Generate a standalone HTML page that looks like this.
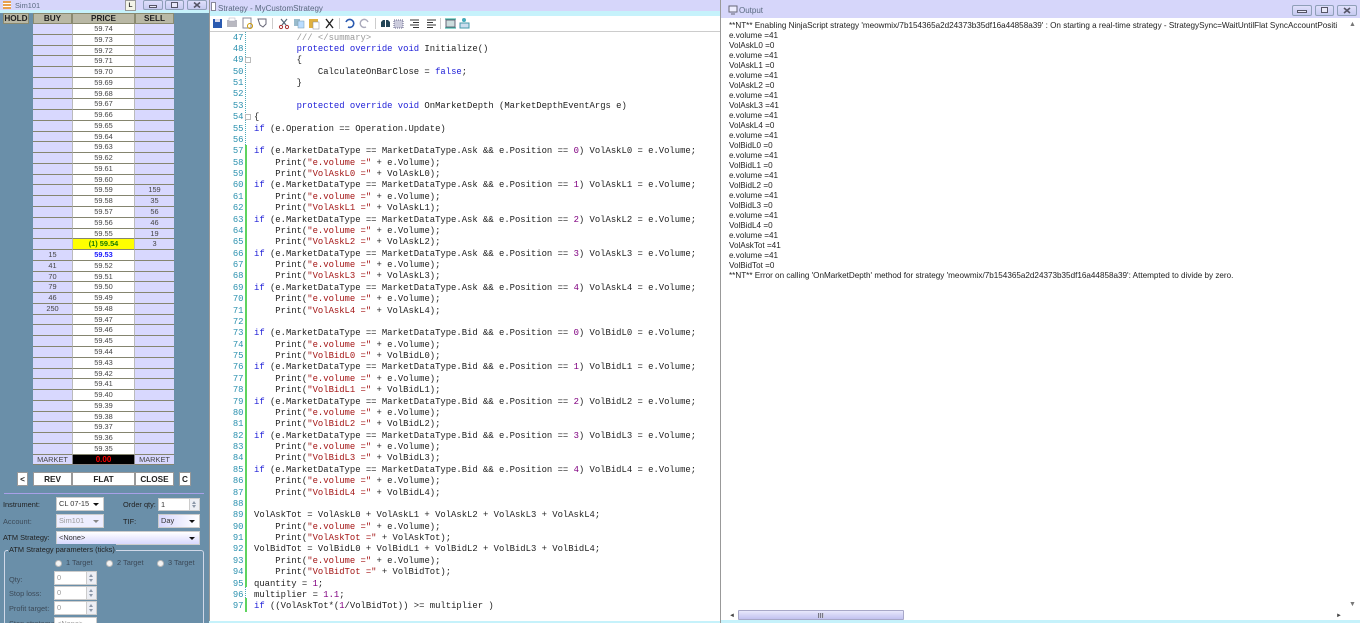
<!DOCTYPE html>
<html><head><meta charset="utf-8"><style>
html,body{margin:0;padding:0;width:1360px;height:623px;overflow:hidden;background:#d6d6fa}
*{box-sizing:border-box}
.a{position:absolute}
#left{left:0;top:0;width:209px;height:623px;background:#6a8fa9;overflow:hidden;font:7.4px/11px "Liberation Sans",sans-serif;color:#222}
.tb{left:0;top:0;height:13px;background:#d6d6fa}
.cy{background:#c6f2fb}
.title{font:8px/11px "Liberation Sans",sans-serif;color:#5a6a80}
.wb{height:10px;background:linear-gradient(#dfdffb,#c6caf0);border:1px solid #8f9fb8;border-radius:2px}
.wb svg{position:absolute;left:0;top:0}
#grid{left:33px;top:24px;width:141px;display:grid;grid-template-columns:39px 63px 39px;grid-auto-rows:10.77px;background:#8a8a70}
#grid div{text-align:center;font:7.4px/10px "Liberation Sans",sans-serif;color:#444;border-bottom:1px solid #85856f;overflow:hidden;height:10.77px}
#grid .l{background:#d8d8fe}
#grid .p{background:#fff;border-left:1px solid #bbb;border-right:1px solid #bbb}
.hd{background:#b9b8a5;font:bold 8.2px/10px "Liberation Sans",sans-serif;color:#222;text-align:center;border:1px solid #8a8a70;top:13px;height:11px}
.btn{background:#fff;border:1px solid #999;font:bold 8.2px/13px "Liberation Sans",sans-serif;text-align:center;color:#222;top:472px;height:14px}
.sel{background:#fff;border:1px solid #ccc;height:14px;font:7.4px/12px "Liberation Sans",sans-serif;padding-left:2px;color:#333;overflow:hidden}
.sel:after{content:"";position:absolute;right:4px;top:5px;border:3px solid transparent;border-top:3px solid #111;border-bottom:0}
.inp{background:#fff;border:1px solid #ccc;height:14px;font:7.4px/12px "Liberation Sans",sans-serif;padding-left:2px;color:#999;overflow:hidden}
.dis{color:#999;background:#eef}
.dis:after{border-top-color:#888}
.lb{font:7.4px/11px "Liberation Sans",sans-serif;color:#222;white-space:nowrap}
.g{color:#3c4a58}
.rd{width:7px;height:7px;border-radius:50%;background:#f4f4f4;border:1px solid #bbb}
.sp{right:0;top:0;bottom:0;width:10px;background:#eceef4;border-left:1px solid #ccc}
.sp:before{content:"";position:absolute;left:2px;top:2px;border:2.5px solid transparent;border-bottom:3px solid #8a96a8;border-top:0}
.sp:after{content:"";position:absolute;left:2px;bottom:2px;border:2.5px solid transparent;border-top:3px solid #8a96a8;border-bottom:0}
#mid{left:209px;top:0;width:511px;height:623px;background:#fff;overflow:hidden}
#code{left:45px;top:32.6px;font:8.9px/11.38px "Liberation Mono",monospace;color:#222;white-space:pre;margin:0}
#nums{left:0px;top:32.6px;width:34.5px;text-align:right;font:8.9px/11.38px "Liberation Mono",monospace;color:#2b91af;white-space:pre;margin:0}
.k{color:#2020d8}.s{color:#a31515}.n{color:#800080}.c{color:#999}
#out{left:720px;top:0;width:640px;height:623px;background:#d6d6fa;overflow:hidden;border-left:1px solid #999}
#txt{left:8px;top:21px;font:8.15px/10px "Liberation Sans",sans-serif;color:#222;white-space:pre;margin:0}
#oc{left:0;top:18px;width:640px;height:602px;background:#fff}
</style></head><body>

<div class="a" id="left">
<div class="a tb" style="width:209px"></div>
<div class="a cy" style="left:0;top:10px;width:209px;height:3px"></div>
<div class="a" style="left:3px;top:1px;width:8px;height:8px;background:repeating-linear-gradient(#e8a050 0 2px,#fff 2px 3px)"></div>
<div class="a title" style="left:15px;top:0;font-size:7.4px">Sim101</div>
<div class="a" style="left:125px;top:0;width:11px;height:11px;background:#f4f4e8;border:1px solid #999;font:bold 6.500px/9px 'Liberation Sans',sans-serif;text-align:center;color:#333">L</div>
<div class="a wb" style="left:143px;top:0;width:20px"><svg width="18" height="8"><rect x="5.500" y="4.500" width="7" height="2" fill="#e8e8f8" stroke="#556"/></svg></div>
<div class="a wb" style="left:165px;top:0;width:19px"><svg width="17" height="8"><rect x="5.500" y="1.500" width="6" height="5" fill="#e8e8f8" stroke="#556"/></svg></div>
<div class="a wb" style="left:187px;top:0;width:20px"><svg width="18" height="8"><path d="M6 1.500l6 5M12 1.500l-6 5" stroke="#556" stroke-width="1.600"/></svg></div>

<div class="a hd" style="left:3px;width:26px;">HOLD</div>
<div class="a hd" style="left:33px;width:39px;">BUY</div>
<div class="a hd" style="left:72px;width:63px;">PRICE</div>
<div class="a hd" style="left:135px;width:39px;">SELL</div>

<div class="a" id="grid">
<div class="l"></div><div class="p">59.74</div><div class="l"></div>
<div class="l"></div><div class="p">59.73</div><div class="l"></div>
<div class="l"></div><div class="p">59.72</div><div class="l"></div>
<div class="l"></div><div class="p">59.71</div><div class="l"></div>
<div class="l"></div><div class="p">59.70</div><div class="l"></div>
<div class="l"></div><div class="p">59.69</div><div class="l"></div>
<div class="l"></div><div class="p">59.68</div><div class="l"></div>
<div class="l"></div><div class="p">59.67</div><div class="l"></div>
<div class="l"></div><div class="p">59.66</div><div class="l"></div>
<div class="l"></div><div class="p">59.65</div><div class="l"></div>
<div class="l"></div><div class="p">59.64</div><div class="l"></div>
<div class="l"></div><div class="p">59.63</div><div class="l"></div>
<div class="l"></div><div class="p">59.62</div><div class="l"></div>
<div class="l"></div><div class="p">59.61</div><div class="l"></div>
<div class="l"></div><div class="p">59.60</div><div class="l"></div>
<div class="l"></div><div class="p">59.59</div><div class="l">159</div>
<div class="l"></div><div class="p">59.58</div><div class="l">35</div>
<div class="l"></div><div class="p">59.57</div><div class="l">56</div>
<div class="l"></div><div class="p">59.56</div><div class="l">46</div>
<div class="l"></div><div class="p">59.55</div><div class="l">19</div>
<div class="l"></div><div class="p" style="background:#ff0;color:#1a7a00;font-weight:bold">(1) 59.54</div><div class="l">3</div>
<div class="l">15</div><div class="p" style="color:#1a1aff;font-weight:bold">59.53</div><div class="l"></div>
<div class="l">41</div><div class="p">59.52</div><div class="l"></div>
<div class="l">70</div><div class="p">59.51</div><div class="l"></div>
<div class="l">79</div><div class="p">59.50</div><div class="l"></div>
<div class="l">46</div><div class="p">59.49</div><div class="l"></div>
<div class="l">250</div><div class="p">59.48</div><div class="l"></div>
<div class="l"></div><div class="p">59.47</div><div class="l"></div>
<div class="l"></div><div class="p">59.46</div><div class="l"></div>
<div class="l"></div><div class="p">59.45</div><div class="l"></div>
<div class="l"></div><div class="p">59.44</div><div class="l"></div>
<div class="l"></div><div class="p">59.43</div><div class="l"></div>
<div class="l"></div><div class="p">59.42</div><div class="l"></div>
<div class="l"></div><div class="p">59.41</div><div class="l"></div>
<div class="l"></div><div class="p">59.40</div><div class="l"></div>
<div class="l"></div><div class="p">59.39</div><div class="l"></div>
<div class="l"></div><div class="p">59.38</div><div class="l"></div>
<div class="l"></div><div class="p">59.37</div><div class="l"></div>
<div class="l"></div><div class="p">59.36</div><div class="l"></div>
<div class="l"></div><div class="p">59.35</div><div class="l"></div>
<div class="l">MARKET</div><div class="p" style="background:#000;color:#f00;font-weight:bold;font-size:8px;border-color:#888">0.00</div><div class="l">MARKET</div>
</div>

<div class="a btn" style="left:17px;width:11px">&lt;</div>
<div class="a btn" style="left:33px;width:39px">REV</div>
<div class="a btn" style="left:72px;width:63px">FLAT</div>
<div class="a btn" style="left:135px;width:39px">CLOSE</div>
<div class="a btn" style="left:179px;width:12px">C</div>
<div class="a" style="left:4px;top:493px;width:200px;height:1px;background:#a8a0e8"></div>

<div class="a lb" style="left:3px;top:499px">Instrument:</div>
<div class="a sel" style="left:56px;top:497px;width:48px">CL 07-15</div>
<div class="a lb" style="left:123px;top:499px">Order qty:</div>
<div class="a inp" style="left:158px;top:498px;width:42px;height:13px;color:#333">1<div class="a sp"></div></div>
<div class="a lb g" style="left:3px;top:516px;color:#3c4a58">Account:</div>
<div class="a sel dis" style="left:56px;top:514px;width:48px">Sim101</div>
<div class="a lb" style="left:123px;top:516px">TIF:</div>
<div class="a sel" style="left:158px;top:514px;width:42px;background:linear-gradient(90deg,#d8d8fe,#fff)">Day</div>
<div class="a lb" style="left:3px;top:532px">ATM Strategy:</div>
<div class="a sel" style="left:56px;top:531px;width:144px;background:linear-gradient(#fff,#d8d8fe)">&lt;None&gt;</div>
<div class="a" style="left:4px;top:550px;width:200px;height:90px;border:1px solid #d0d8e8;border-radius:3px"></div>
<div class="a lb" style="left:8px;top:544px;background:#6a8fa9;padding:0 1px">ATM Strategy parameters (ticks)</div>
<div class="a rd" style="left:55px;top:560px"></div><div class="a lb g" style="left:66px;top:557px">1 Target</div>
<div class="a rd" style="left:106px;top:560px"></div><div class="a lb g" style="left:117px;top:557px">2 Target</div>
<div class="a rd" style="left:157px;top:560px"></div><div class="a lb g" style="left:168px;top:557px">3 Target</div>
<div class="a lb g" style="left:9px;top:574px">Qty:</div>
<div class="a inp" style="left:54px;top:571px;width:43px">0<div class="a sp"></div></div>
<div class="a lb g" style="left:9px;top:588px">Stop loss:</div>
<div class="a inp" style="left:54px;top:586px;width:43px">0<div class="a sp"></div></div>
<div class="a lb g" style="left:9px;top:603px">Profit target:</div>
<div class="a inp" style="left:54px;top:601px;width:43px">0<div class="a sp"></div></div>
<div class="a lb g" style="left:9px;top:618px">Stop strategy:</div>
<div class="a inp" style="left:54px;top:617px;width:43px">&lt;None&gt;</div>
</div>

<div class="a" id="mid">
<div class="a" style="left:0;top:0;width:511px;height:11px;background:#d6d6fa"></div>
<div class="a cy" style="left:0;top:11px;width:511px;height:5px"></div>
<div class="a" style="left:0;top:0;width:1px;height:623px;background:#999"></div>
<div class="a" style="left:2px;top:2px;width:5px;height:9px;background:#fff;border:1px solid #889"></div>
<div class="a title" style="left:9px;top:3px">Strategy - MyCustomStrategy</div>
<div class="a" style="left:1px;top:31px;width:510px;height:1px;background:#ccc"></div>
<svg class="a" style="left:1px;top:16px" width="300" height="15" viewBox="0 0 300 15">
<rect x="3" y="3" width="9" height="9" fill="#2a5ab0"/><rect x="5" y="3" width="5" height="3" fill="#dde"/>
<rect x="17" y="4" width="10" height="7" fill="#b8b8c0"/><rect x="19" y="2" width="6" height="3" fill="#fff" stroke="#aab" stroke-width=".5"/>
<rect x="33" y="2" width="8" height="10" fill="#fff" stroke="#889"/><circle cx="40" cy="10" r="2.500" fill="none" stroke="#c90"/>
<path d="M48 3h8v5l-3 3-3-2z" fill="#fff" stroke="#667"/>
<line x1="62.500" y1="2" x2="62.500" y2="13" stroke="#ccc"/>
<path d="M71 3l5 6M77 3l-5 6" stroke="#567" stroke-width="1.200"/><circle cx="71" cy="11" r="1.600" fill="none" stroke="#a33"/><circle cx="77" cy="11" r="1.600" fill="none" stroke="#a33"/>
<rect x="84" y="3" width="6" height="7" fill="#9bc"/><rect x="88" y="5" width="6" height="7" fill="#bdf" stroke="#79a" stroke-width=".5"/>
<rect x="99" y="3" width="9" height="9" fill="#e0b040"/><rect x="103" y="6" width="6" height="7" fill="#fff" stroke="#889" stroke-width=".5"/>
<path d="M116 3l7 9M123 3l-7 9" stroke="#222" stroke-width="1.400"/>
<line x1="129.500" y1="2" x2="129.500" y2="13" stroke="#ccc"/>
<path d="M136 6a4 4 0 1 1 2 5" fill="none" stroke="#2a5ab0" stroke-width="1.600"/>
<path d="M158 6a4 4 0 1 0-2 5" fill="none" stroke="#aab" stroke-width="1.400"/>
<line x1="165.500" y1="2" x2="165.500" y2="13" stroke="#ccc"/>
<path d="M171 11v-5l2-2h2v7zM176 11v-7h2l2 2v5z" fill="#245"/>
<rect x="184" y="4" width="9" height="8" fill="#ccd" stroke="#668" stroke-dasharray="1 1"/>
<path d="M200 4h9M203 6.500h6M200 9h9M203 11.500h6" stroke="#333"/>
<path d="M217 4h9M217 6.500h6M217 9h9M217 11.500h6" stroke="#333"/>
<line x1="230.500" y1="2" x2="230.500" y2="13" stroke="#ccc"/>
<rect x="236" y="4" width="9" height="7" fill="#cdd" stroke="#667"/><path d="M235 3h11M235 12h11" stroke="#2a9"/>
<rect x="250" y="7" width="9" height="5" fill="#cde" stroke="#49a"/><circle cx="254" cy="4" r="2" fill="#4ab"/>
</svg>
<div class="a" style="left:35.500px;top:32px;width:0;height:113px;border-left:1px dotted #4aa8b8"></div>
<div class="a" style="left:36px;top:145px;width:2px;height:442px;background:#5fd35f"></div>
<div class="a" style="left:35.500px;top:587px;width:0;height:11px;border-left:1px dotted #4aa8b8"></div>
<div class="a" style="left:36px;top:598px;width:2px;height:14px;background:#5fd35f"></div>
<div class="a" style="left:36px;top:57px;width:6px;height:6px;border:1px solid #bbb;background:#fff"></div>
<div class="a" style="left:36px;top:114px;width:6px;height:6px;border:1px solid #bbb;background:#fff"></div>
<pre class="a" id="nums">47
48
49
50
51
52
53
54
55
56
57
58
59
60
61
62
63
64
65
66
67
68
69
70
71
72
73
74
75
76
77
78
79
80
81
82
83
84
85
86
87
88
89
90
91
92
93
94
95
96
97</pre>
<pre class="a" id="code">        <span class="c">/// &lt;/summary&gt;</span>
        <span class="k">protected override void</span> Initialize()
        {
            CalculateOnBarClose = <span class="k">false</span>;
        }

        <span class="k">protected override void</span> OnMarketDepth (MarketDepthEventArgs e)
{
<span class="k">if</span> (e.Operation == Operation.Update)

<span class="k">if</span> (e.MarketDataType == MarketDataType.Ask &amp;&amp; e.Position == <span class="n">0</span>) VolAskL0 = e.Volume;
    Print(<span class="s">"e.volume ="</span> + e.Volume);
    Print(<span class="s">"VolAskL0 ="</span> + VolAskL0);
<span class="k">if</span> (e.MarketDataType == MarketDataType.Ask &amp;&amp; e.Position == <span class="n">1</span>) VolAskL1 = e.Volume;
    Print(<span class="s">"e.volume ="</span> + e.Volume);
    Print(<span class="s">"VolAskL1 ="</span> + VolAskL1);
<span class="k">if</span> (e.MarketDataType == MarketDataType.Ask &amp;&amp; e.Position == <span class="n">2</span>) VolAskL2 = e.Volume;
    Print(<span class="s">"e.volume ="</span> + e.Volume);
    Print(<span class="s">"VolAskL2 ="</span> + VolAskL2);
<span class="k">if</span> (e.MarketDataType == MarketDataType.Ask &amp;&amp; e.Position == <span class="n">3</span>) VolAskL3 = e.Volume;
    Print(<span class="s">"e.volume ="</span> + e.Volume);
    Print(<span class="s">"VolAskL3 ="</span> + VolAskL3);
<span class="k">if</span> (e.MarketDataType == MarketDataType.Ask &amp;&amp; e.Position == <span class="n">4</span>) VolAskL4 = e.Volume;
    Print(<span class="s">"e.volume ="</span> + e.Volume);
    Print(<span class="s">"VolAskL4 ="</span> + VolAskL4);

<span class="k">if</span> (e.MarketDataType == MarketDataType.Bid &amp;&amp; e.Position == <span class="n">0</span>) VolBidL0 = e.Volume;
    Print(<span class="s">"e.volume ="</span> + e.Volume);
    Print(<span class="s">"VolBidL0 ="</span> + VolBidL0);
<span class="k">if</span> (e.MarketDataType == MarketDataType.Bid &amp;&amp; e.Position == <span class="n">1</span>) VolBidL1 = e.Volume;
    Print(<span class="s">"e.volume ="</span> + e.Volume);
    Print(<span class="s">"VolBidL1 ="</span> + VolBidL1);
<span class="k">if</span> (e.MarketDataType == MarketDataType.Bid &amp;&amp; e.Position == <span class="n">2</span>) VolBidL2 = e.Volume;
    Print(<span class="s">"e.volume ="</span> + e.Volume);
    Print(<span class="s">"VolBidL2 ="</span> + VolBidL2);
<span class="k">if</span> (e.MarketDataType == MarketDataType.Bid &amp;&amp; e.Position == <span class="n">3</span>) VolBidL3 = e.Volume;
    Print(<span class="s">"e.volume ="</span> + e.Volume);
    Print(<span class="s">"VolBidL3 ="</span> + VolBidL3);
<span class="k">if</span> (e.MarketDataType == MarketDataType.Bid &amp;&amp; e.Position == <span class="n">4</span>) VolBidL4 = e.Volume;
    Print(<span class="s">"e.volume ="</span> + e.Volume);
    Print(<span class="s">"VolBidL4 ="</span> + VolBidL4);

VolAskTot = VolAskL0 + VolAskL1 + VolAskL2 + VolAskL3 + VolAskL4;
    Print(<span class="s">"e.volume ="</span> + e.Volume);
    Print(<span class="s">"VolAskTot ="</span> + VolAskTot);
VolBidTot = VolBidL0 + VolBidL1 + VolBidL2 + VolBidL3 + VolBidL4;
    Print(<span class="s">"e.volume ="</span> + e.Volume);
    Print(<span class="s">"VolBidTot ="</span> + VolBidTot);
quantity = <span class="n">1</span>;
multiplier = <span class="n">1.1</span>;
<span class="k">if</span> ((VolAskTot*(<span class="n">1</span>/VolBidTot)) &gt;= multiplier )</pre>
<div class="a" style="left:0;top:621px;width:511px;height:2px;background:#c6f2fb"></div>
</div>

<div class="a" id="out">
<div class="a cy" style="left:0;top:620px;width:640px;height:3px"></div>
<div class="a title" style="left:18px;top:5px">Output</div>
<svg class="a" style="left:7px;top:5px" width="10" height="10"><rect x="1" y="1" width="8" height="6" fill="#eef" stroke="#667"/><path d="M3 9h4" stroke="#667"/></svg>
<div class="a wb" style="left:571px;top:5px;width:20px;height:11px"><svg width="18" height="9"><rect x="4.500" y="4.500" width="9" height="2" fill="#e8e8f8" stroke="#556"/></svg></div>
<div class="a wb" style="left:594px;top:5px;width:19px;height:11px"><svg width="17" height="9"><rect x="5.500" y="1.500" width="6" height="5" fill="#e8e8f8" stroke="#556"/></svg></div>
<div class="a wb" style="left:616px;top:5px;width:20px;height:11px"><svg width="18" height="9"><path d="M6 2l6 5M12 2l-6 5" stroke="#556" stroke-width="1.600"/></svg></div>
<div class="a" id="oc"></div>
<pre class="a" id="txt">**NT** Enabling NinjaScript strategy 'meowmix/7b154365a2d24373b35df16a44858a39' : On starting a real-time strategy - StrategySync=WaitUntilFlat SyncAccountPositi
e.volume =41
VolAskL0 =0
e.volume =41
VolAskL1 =0
e.volume =41
VolAskL2 =0
e.volume =41
VolAskL3 =41
e.volume =41
VolAskL4 =0
e.volume =41
VolBidL0 =0
e.volume =41
VolBidL1 =0
e.volume =41
VolBidL2 =0
e.volume =41
VolBidL3 =0
e.volume =41
VolBidL4 =0
e.volume =41
VolAskTot =41
e.volume =41
VolBidTot =0
**NT** Error on calling 'OnMarketDepth' method for strategy 'meowmix/7b154365a2d24373b35df16a44858a39': Attempted to divide by zero.</pre>
<div class="a" style="left:628px;top:21px;font:7px/8px 'Liberation Sans',sans-serif;color:#777">▲</div>
<div class="a" style="left:628px;top:601px;font:7px/8px 'Liberation Sans',sans-serif;color:#777">▼</div>
<div class="a" style="left:8px;top:612px;font:6px/8px 'Liberation Sans',sans-serif;color:#444">◄</div>
<div class="a" style="left:17px;top:610px;width:166px;height:10px;background:linear-gradient(#e8e8fc,#c2c2f0);border:1px solid #a8a8c8;border-radius:1px"></div>
<div class="a" style="left:97px;top:613px;width:6px;height:5px;background:repeating-linear-gradient(90deg,#778 0 1px,#ccd 1px 2px)"></div>
<div class="a" style="left:615px;top:612px;font:6px/8px 'Liberation Sans',sans-serif;color:#444">►</div>
</div>
</body></html>
